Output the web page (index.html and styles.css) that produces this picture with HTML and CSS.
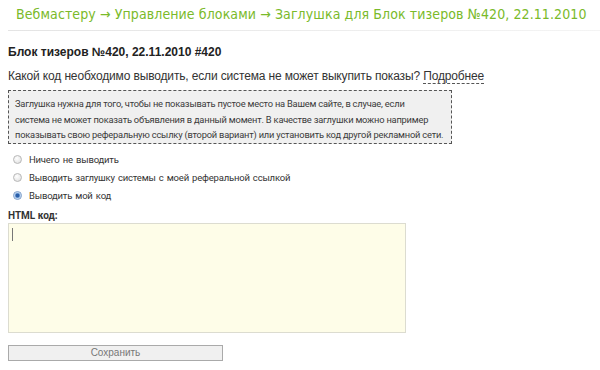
FILE: index.html
```html
<!DOCTYPE html>
<html lang="ru">
<head>
<meta charset="utf-8">
<link rel="stylesheet" href="styles.css">
</head>
<body>
<div class="page">
  <h1 class="crumbs">Вебмастеру → Управление блоками → Заглушка для Блок тизеров №420, 22.11.2010</h1>
  <div class="rule"></div>
  <h2 class="title">Блок тизеров №420, 22.11.2010 #420</h2>
  <p class="question">Какой код необходимо выводить, если система не может выкупить показы? <span class="more">Подробнее</span></p>
  <div class="note">Заглушка нужна для того, чтобы не показывать пустое место на Вашем сайте, в случае, если<br>система не может показать объявления в данный момент. В качестве заглушки можно например<br>показывать свою реферальную ссылку (второй вариант) или установить код другой рекламной сети.</div>
  <div class="options">
    <label class="opt"><span class="radio"></span>Ничего не выводить</label>
    <label class="opt"><span class="radio"></span>Выводить заглушку системы с моей реферальной ссылкой</label>
    <label class="opt"><span class="radio checked"></span>Выводить мой код</label>
  </div>
  <div class="field-label">HTML код:</div>
  <div class="code"><span class="caret"></span></div>
  <div class="btn">Сохранить</div>
</div>
</body>
</html>
```
FILE: styles.css
```css
* { box-sizing: border-box; }
html, body { margin: 0; padding: 0; background: #fff; }
body { font-family: "Liberation Sans", Arial, sans-serif; color: #333; }
.page { display: flex; flex-direction: column; align-items: flex-start; padding: 0 8px; }
.crumbs {
  margin: 0; padding: 5px 0 0 8px;
  font-family: "DejaVu Sans Condensed", "DejaVu Sans", Verdana, sans-serif;
  font-stretch: condensed; font-weight: normal;
  font-size: 14px; line-height: 18px; color: #7aba2a; letter-spacing: 0.1px;
  white-space: nowrap;
}
.rule { align-self: stretch; height: 1px; margin: 7px -8px 0 0; background: linear-gradient(to right, #e4e4e4, #f4f4f4); }
.title { margin: 13px 0 0; font-size: 12px; line-height: 16px; font-weight: bold; color: #222; }
.question { margin: 8px 0 0; font-size: 12px; line-height: 16px; color: #333; letter-spacing: -0.15px; }
.more { border-bottom: 1px dashed #555; }
.note {
  margin-top: 6px; width: 444px; padding: 5px 2px 0 6px;
  background: #f0f0f0; border: 1px dashed #555;
  font-family: Roboto, "Liberation Sans", Arial, sans-serif;
  font-size: 9.3px; line-height: 15.5px; color: #3a3a3a; letter-spacing: -0.2px;
  white-space: nowrap;
}
.options { display: flex; flex-direction: column; gap: 5px; margin-top: 9px; }
.opt {
  display: flex; align-items: center; padding-left: 5px;
  font-family: Roboto, "Liberation Sans", Arial, sans-serif;
  font-size: 9.5px; line-height: 13px; color: #333; word-spacing: 1px; letter-spacing: -0.2px;
}
.radio {
  width: 9px; height: 9px; border-radius: 50%; margin-right: 7px;
  border: 1px solid #b8b8b8; background: radial-gradient(circle at 40% 35%, #fff, #dcdcdc);
}
.radio.checked { background: radial-gradient(circle, #2a5ea8 0 1.5px, #8cb4e4 2.5px, #e8f0fa 3.5px); border-color: #7a9cc8; }
.field-label {
  margin-top: 7px; font-size: 10px; line-height: 13px; font-weight: bold; color: #333;
  font-family: Roboto, "Liberation Sans", Arial, sans-serif;
}
.code {
  margin-top: 1px; width: 398px; height: 110px;
  background: #fefde8; border: 1px solid #dcdcd0; padding: 4px 0 0 3px;
}
.caret { display: block; width: 1px; height: 13px; background: #777; }
.btn {
  margin-top: 12px; width: 215px; height: 16px;
  background: #f0f0f0; border: 1px solid #aaa;
  font-size: 10px; line-height: 14px; text-align: center; color: #777;
}
```
